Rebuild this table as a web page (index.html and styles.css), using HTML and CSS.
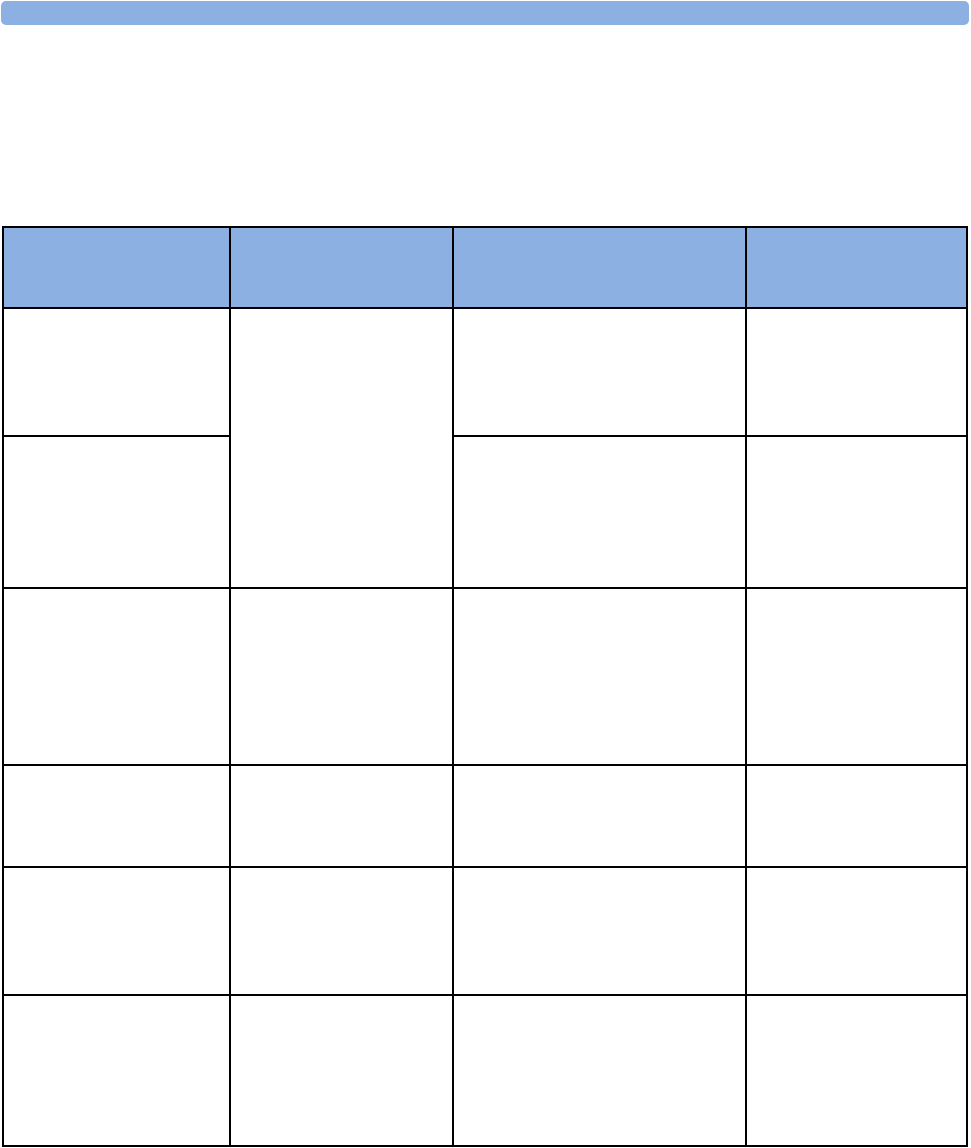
FILE: index.html
```html
<!DOCTYPE html>
<html lang="en">
<head>
<meta charset="utf-8">
<title>Table</title>
<link rel="stylesheet" href="styles.css">
</head>
<body>
<div class="topbar"></div>
<div class="grid">
  <div class="cell head"></div>
  <div class="cell head"></div>
  <div class="cell head"></div>
  <div class="cell head"></div>

  <div class="cell"></div>
  <div class="cell span2"></div>
  <div class="cell"></div>
  <div class="cell"></div>

  <div class="cell"></div>
  <div class="cell"></div>
  <div class="cell"></div>

  <div class="cell"></div>
  <div class="cell"></div>
  <div class="cell"></div>
  <div class="cell"></div>

  <div class="cell"></div>
  <div class="cell"></div>
  <div class="cell"></div>
  <div class="cell"></div>

  <div class="cell"></div>
  <div class="cell"></div>
  <div class="cell"></div>
  <div class="cell"></div>

  <div class="cell"></div>
  <div class="cell"></div>
  <div class="cell"></div>
  <div class="cell"></div>
</div>
</body>
</html>
```
FILE: styles.css
```css
html, body {
  margin: 0;
  padding: 0;
  background: #ffffff;
  font-family: "Liberation Sans", Arial, sans-serif;
}
.topbar {
  margin: 1px 2px 0 1px;
  height: 24px;
  background: #8db0e3;
  border-radius: 5px;
}
.grid {
  margin: 201px 0 0 2px;
  width: 964px;
  display: grid;
  grid-template-columns: 227px 223px 293px 221px;
  grid-template-rows: 81px 128px 152px 177px 102px 128px 151px;
  border-top: 2px solid #000;
  border-left: 2px solid #000;
}
.cell {
  box-sizing: border-box;
  border-right: 2px solid #000;
  border-bottom: 2px solid #000;
}
.head {
  background: #8db0e3;
}
.span2 {
  grid-row: span 2;
}
```
